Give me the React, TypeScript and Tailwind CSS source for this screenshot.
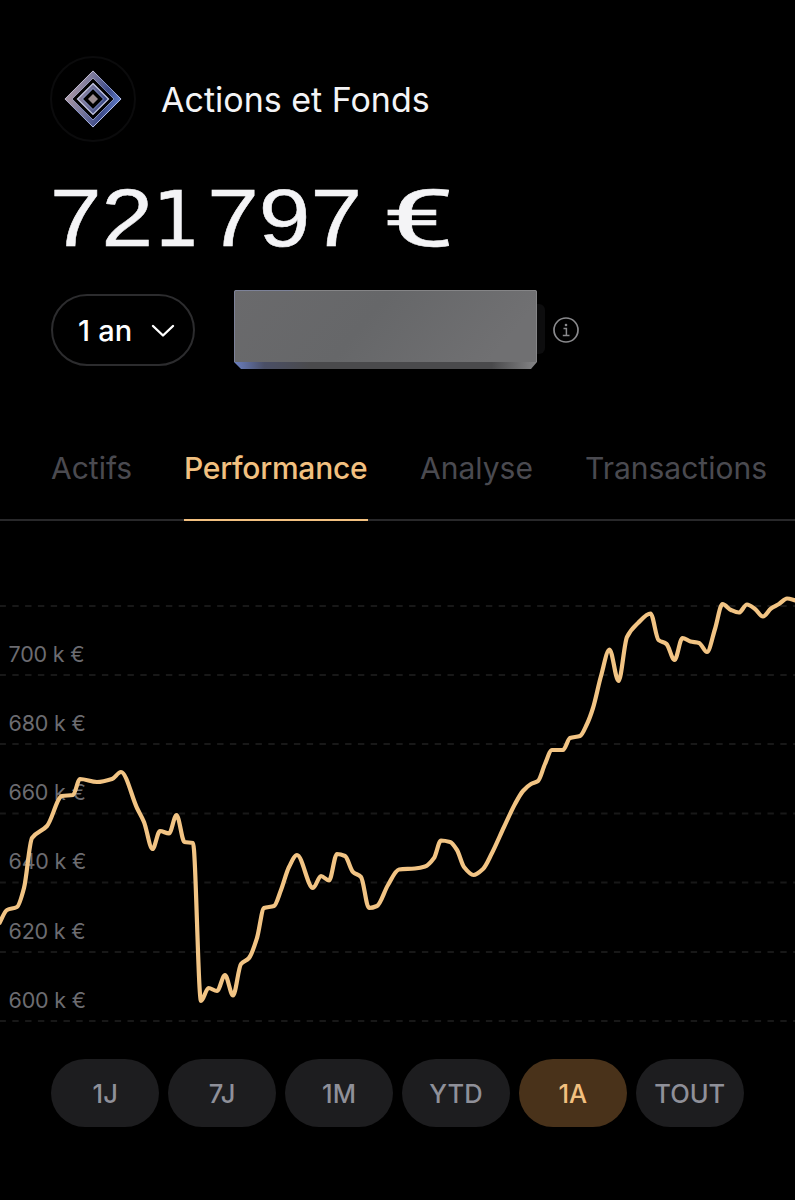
import React, { useState } from 'react';

const tabs = [
  { label: 'Actifs', width: 'w-[81px]' },
  { label: 'Performance', width: 'w-[184px]' },
  { label: 'Analyse', width: 'w-[113px]' },
  { label: 'Transactions', width: 'w-[182px]' },
];

const ranges = ['1J', '7J', '1M', 'YTD', '1A', 'TOUT'];

// Horizontal guides, the label sits above its own line
const guides = [
  { y: 26, label: '' },
  { y: 95, label: '700 k €' },
  { y: 164, label: '680 k €' },
  { y: 233.5, label: '660 k €' },
  { y: 302.5, label: '640 k €' },
  { y: 372, label: '620 k €' },
  { y: 441, label: '600 k €' },
];

const points: [number, number][] = [
  [-1, 924], [7, 910], [17, 907], [24, 888], [32, 838], [47, 826], [62, 796], [73, 795], [80, 779],
  [97, 782], [112, 779], [121, 772], [137, 808], [144, 822], [152.5, 849], [160, 831], [169, 833.5],
  [176.5, 815], [184.5, 842], [193, 843], [201, 1001], [208.5, 988], [217, 991], [225, 975],
  [233, 995.5], [241, 964], [249, 958], [257, 938], [264, 908], [274, 906], [281, 890], [289, 867], [297, 855],
  [313, 888], [321, 876], [329, 880.5], [337, 854], [345, 856], [353, 872], [361, 877], [369, 908],
  [377, 906], [388, 885], [399, 869.5], [415, 868.5], [425, 866.5], [434, 858], [441, 840.5], [450, 842], [457, 850],
  [464, 867], [473.5, 875], [483, 869], [492, 853], [504, 827], [515, 804], [523, 791], [531, 784], [538, 781],
  [545, 764], [552, 750], [563, 750], [570, 738], [580, 736], [587, 724], [593, 708], [601, 676],
  [609.5, 649.5], [618.5, 681], [627, 637], [638, 623], [650.5, 613.5], [658.5, 640], [666.5, 644],
  [674.5, 660], [682.5, 638], [690.5, 641.5], [699, 643], [707, 652], [715, 629], [722.5, 604],
  [731, 610], [739, 612.5], [747, 604.5], [755, 609], [763, 616.5], [771, 608.5], [779, 604],
  [787, 598.5], [796, 600.5],
];

// Monotone cubic interpolation, keeps the peaks from overshooting
function smoothPath(pts: [number, number][]) {
  const n = pts.length;
  const slopes: number[] = [];
  for (let i = 0; i < n - 1; i++) {
    slopes.push((pts[i + 1][1] - pts[i][1]) / (pts[i + 1][0] - pts[i][0]));
  }
  const m = pts.map((_, i) => {
    if (i === 0) return slopes[0];
    if (i === n - 1) return slopes[n - 2];
    const a = slopes[i - 1];
    const b = slopes[i];
    if (a * b <= 0) return 0;
    return (2 * a * b) / (a + b);
  });
  let d = `M${pts[0][0]} ${pts[0][1]}`;
  for (let i = 0; i < n - 1; i++) {
    const h = (pts[i + 1][0] - pts[i][0]) / 3;
    d += `C${pts[i][0] + h} ${pts[i][1] + m[i] * h} ${pts[i + 1][0] - h} ${pts[i + 1][1] - m[i + 1] * h} ${pts[i + 1][0]} ${pts[i + 1][1]}`;
  }
  return d;
}

function Logo() {
  return (
    <div className="flex h-[86px] w-[86px] items-center justify-center rounded-full border-2 border-[#0b0b0c]">
      <svg width="58" height="58" viewBox="0 0 58 58" fill="none">
        <defs>
          <linearGradient id="outer" x1="0" y1="20" x2="58" y2="38" gradientUnits="userSpaceOnUse">
            <stop offset="0" stopColor="#b39da7" />
            <stop offset="0.4" stopColor="#77769a" />
            <stop offset="0.7" stopColor="#3c4a88" />
            <stop offset="1" stopColor="#6a8cdd" />
          </linearGradient>
          <linearGradient id="edge" x1="10" y1="10" x2="48" y2="48" gradientUnits="userSpaceOnUse">
            <stop offset="0" stopColor="#d2c6d0" />
            <stop offset="0.5" stopColor="#7f8fc8" />
            <stop offset="1" stopColor="#c5cbee" />
          </linearGradient>
        </defs>
        <path d="M29 4.5 53.5 29 29 53.5 4.5 29Z" stroke="url(#outer)" strokeWidth="5.5" />
        <path d="M29 1 57 29 29 57 1 29Z" stroke="url(#edge)" strokeWidth="1" />
        <path d="M29 8 50 29 29 50 8 29Z" stroke="url(#edge)" strokeWidth="0.7" />
        <path d="M29 16 42 29 29 42 16 29Z" stroke="url(#outer)" strokeWidth="4" />
        <path d="M29 13.5 44.5 29 29 44.5 13.5 29Z" stroke="#c3c6e2" strokeWidth="1.2" />
        <path d="M29 18.5 39.5 29 29 39.5 18.5 29Z" stroke="#8da0db" strokeWidth="0.7" />
        <path d="M29 24 34 29 29 34 24 29Z" fill="#9b8d91" />
      </svg>
    </div>
  );
}

export default function App() {
  const [tab, setTab] = useState('Performance');
  const [range, setRange] = useState('1A');

  return (
    <div className="flex h-[1200px] w-[795px] flex-col overflow-hidden bg-black font-['Inter',sans-serif] text-white">
      <header className="flex items-center gap-[25px] pl-[50px] pt-[56px]">
        <Logo />
        <h1 className="whitespace-nowrap pt-[2px] text-[34px] leading-[40px] text-[#f4f4f6]">Actions et Fonds</h1>
      </header>

      <div className="mt-[32px] flex h-[90px] items-center whitespace-nowrap pl-[50px] font-['Liberation_Sans',sans-serif] text-[82px] leading-[90px] text-[#f4f4f6] [-webkit-text-stroke:0.5px_#f4f4f6]">
        <span className="inline-flex w-[332px] origin-left scale-x-[1.13]">
          72<span className="mr-[11px] inline-block w-[37px] origin-left scale-x-[0.86] pt-[2px] font-['DejaVu_Sans',sans-serif] text-[77px]">1</span>797
        </span>
        <span className="inline-block origin-left scale-x-[1.62] font-['Roboto',sans-serif] text-[80px]">€</span>
      </div>

      <div className="mt-[25px] flex h-[82px] items-center pl-[51px]">
        <button className="flex h-[72px] w-[144px] items-center gap-[19px] rounded-full border-2 border-[#2c2c2e] pl-[25px]">
          <span className="whitespace-nowrap pt-[2px] text-[29px] font-medium leading-[36px] tracking-[0.2px]">1 an</span>
          <svg width="24" height="14" viewBox="0 0 24 14" fill="none" className="mt-px">
            <path d="M2 2 12 11.5 22 2" stroke="white" strokeWidth="2.4" strokeLinecap="round" strokeLinejoin="round" />
          </svg>
        </button>
        <svg className="ml-[38px]" width="314" height="82" viewBox="0 0 314 82">
          <defs>
            <linearGradient id="bevel" x1="0" x2="1">
              <stop offset="0" stopColor="#6b7fc0" />
              <stop offset="0.1" stopColor="#4a4f66" />
              <stop offset="0.25" stopColor="#4a4a4c" />
              <stop offset="0.85" stopColor="#4a4a4c" />
              <stop offset="1" stopColor="#858587" />
            </linearGradient>
            <linearGradient id="face" x1="0" x2="1" y2="0.2">
              <stop offset="0" stopColor="#6a6a6c" />
              <stop offset="0.5" stopColor="#666769" />
              <stop offset="1" stopColor="#707072" />
            </linearGradient>
          </defs>
          <rect x="298" y="15" width="14" height="50" rx="6" fill="#0d0d0e" />
          <path d="M1 73 8 80H298L304 73V68H1Z" fill="url(#bevel)" />
          <path d="M3 1H302Q304 1 304 3V73H1V3Q1 1 3 1Z" fill="url(#face)" />
          <path d="M1.5 73V3Q1.5 1.5 3 1.5H60" fill="none" stroke="#7d8299" />
          <path d="M60 1.5H302Q303.5 1.5 303.5 3V73" fill="none" stroke="#858587" />
        </svg>
        <svg className="ml-[6px]" width="26" height="26" viewBox="0 0 26 26" fill="none" stroke="#89898c">
          <circle cx="13" cy="13" r="12" strokeWidth="1.7" />
          <path d="M10.5 11.5H13.4V18.5M9.8 18.5H16.5" strokeWidth="1.5" />
          <circle cx="13" cy="8" r="1.3" fill="#89898c" stroke="none" />
        </svg>
      </div>

      <nav className="mt-[74px] flex h-[76px] shrink-0 gap-[52px] border-b-2 border-[#28282a] pl-[51px]">
        {tabs.map((t) => (
          <button
            key={t.label}
            onClick={() => setTab(t.label)}
            className={`-mb-[2px] flex h-[76px] shrink-0 items-start whitespace-nowrap border-b-2 pt-[5px] text-left text-[30px] leading-[36px] ${t.width} ${
              tab === t.label ? 'border-[#f2c080] font-medium tracking-[-0.25px] text-[#f2c080]' : 'border-transparent text-[#4a4a50]'
            }`}
          >
            {t.label}
          </button>
        ))}
      </nav>

      <svg className="mt-[59px] shrink-0" width="795" height="450" viewBox="0 0 795 450" fill="none">
        {guides.map((g) => (
          <g key={g.y}>
            <path d={`M-0.5 ${g.y}H795`} stroke="#181818" strokeWidth="2" strokeDasharray="6.4 6.4" />
            <text x="8.5" y={g.y - 13.5} fill="#6c6c71" fontSize="21.5" letterSpacing="-0.2">
              {g.label}
            </text>
          </g>
        ))}
        <path
          d={smoothPath(points.map(([x, y]) => [x, y - 580]))}
          stroke="#f2c484"
          strokeWidth="4.2"
          strokeLinejoin="round"
        />
      </svg>

      <div className="ml-[51px] mt-[29px] grid h-[68px] w-[693px] shrink-0 grid-cols-6 gap-[8.5px] self-start">
        {ranges.map((r) => (
          <button
            key={r}
            onClick={() => setRange(r)}
            className={`rounded-full pt-[2px] text-[25.5px] font-medium leading-[32px] ${
              range === r ? 'bg-[#49321a] text-[#f2c080]' : 'bg-[#1d1d1f] text-[#8f9099]'
            }`}
          >
            {r}
          </button>
        ))}
      </div>
    </div>
  );
}
